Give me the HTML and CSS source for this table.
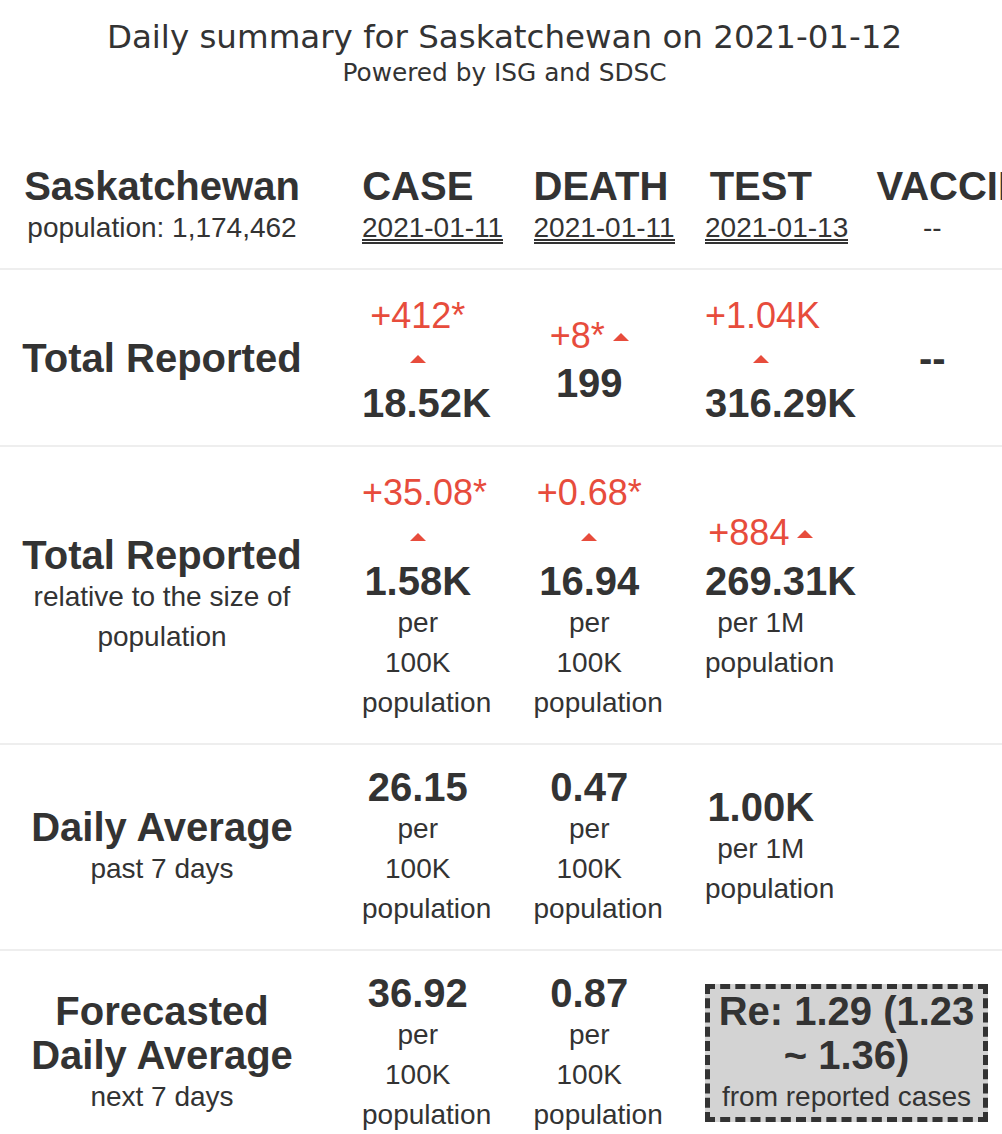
FILE: index.html
```html
<!DOCTYPE html>
<html lang="en">
<head>
<meta charset="utf-8">
<title>Daily summary for Saskatchewan</title>
<link rel="stylesheet" href="styles.css">
</head>
<body>
<header class="summary-head">
  <h1 class="summary-title">Daily summary for Saskatchewan on 2021-01-12</h1>
  <p class="summary-credit">Powered by ISG and SDSC</p>
</header>
<table class="stats">
  <thead>
    <tr>
      <th class="row-label"><div class="big">Saskatchewan</div><div class="note">population: 1,174,462</div></th>
      <th class="metric"><div class="big">CASE</div><div class="note"><span class="date">2021-01-11</span></div></th>
      <th class="metric"><div class="big">DEATH</div><div class="note"><span class="date">2021-01-11</span></div></th>
      <th class="metric"><div class="big">TEST</div><div class="note"><span class="date">2021-01-13</span></div></th>
      <th class="metric"><div class="big">VACCINE</div><div class="note">--</div></th>
    </tr>
  </thead>
  <tbody>
    <tr>
      <th class="row-label"><div class="big">Total Reported</div></th>
      <td><div class="delta"><span class="delta-num">+412*</span> <span class="caret"></span></div><div class="big">18.52K</div></td>
      <td><div class="delta"><span class="delta-num">+8*</span> <span class="caret"></span></div><div class="big">199</div></td>
      <td><div class="delta"><span class="delta-num">+1.04K</span> <span class="caret"></span></div><div class="big">316.29K</div></td>
      <td><div class="big">--</div></td>
    </tr>
    <tr>
      <th class="row-label"><div class="big">Total Reported</div><div class="note">relative to the size of population</div></th>
      <td><div class="delta"><span class="delta-num">+35.08*</span> <span class="caret"></span></div><div class="big">1.58K</div><div class="note">per 100K population</div></td>
      <td><div class="delta"><span class="delta-num">+0.68*</span> <span class="caret"></span></div><div class="big">16.94</div><div class="note">per 100K population</div></td>
      <td><div class="delta"><span class="delta-num">+884</span> <span class="caret"></span></div><div class="big">269.31K</div><div class="note">per 1M population</div></td>
      <td></td>
    </tr>
    <tr>
      <th class="row-label"><div class="big">Daily Average</div><div class="note">past 7 days</div></th>
      <td><div class="big">26.15</div><div class="note">per 100K population</div></td>
      <td><div class="big">0.47</div><div class="note">per 100K population</div></td>
      <td><div class="big">1.00K</div><div class="note">per 1M population</div></td>
      <td></td>
    </tr>
    <tr>
      <th class="row-label"><div class="big">Forecasted Daily Average</div><div class="note">next 7 days</div></th>
      <td><div class="big">36.92</div><div class="note">per 100K population</div></td>
      <td><div class="big">0.87</div><div class="note">per 100K population</div></td>
      <td colspan="2"><div class="re-box"><div class="big">Re: 1.29 (1.23 ~ 1.36)</div><div class="note">from reported cases</div></div></td>
    </tr>
  </tbody>
</table>
</body>
</html>
```

FILE: styles.css
```css
* { box-sizing: border-box; }
html, body { margin: 0; padding: 0; overflow: hidden; }
body {
  background: #fff;
  color: #333;
  font-family: "Liberation Sans", Arial, Helvetica, sans-serif;
  font-size: 28px;
  line-height: 40px;
}
.summary-head {
  padding-top: 19px;
  padding-left: 7px;
  text-align: center;
  font-family: "DejaVu Sans", Verdana, sans-serif;
  color: #333;
}
.summary-title { margin: 0; font-size: 32.5px; font-weight: normal; line-height: 37px; }
.summary-credit { margin: 0; padding-top: 3px; font-size: 24.8px; line-height: 28px; }

.stats {
  margin-top: 57px;
  width: 1018px;
  table-layout: fixed;
  border-collapse: collapse;
}
.stats th, .stats td {
  width: 171.5px;
  padding: 20px 30px;
  text-align: center;
  vertical-align: middle;
  font-weight: normal;
}
.stats .row-label { width: 332px; padding-left: 22px; }
.stats tbody tr { border-top: 2px solid #eee; }

.big { font-size: 40px; font-weight: bold; line-height: 44px; }
.delta { color: #e74c3c; }
.delta-num { font-size: 36px; line-height: 1.42857; }
.caret {
  display: inline-block;
  width: 0;
  height: 0;
  margin-bottom: 7px;
  vertical-align: baseline;
  border-left: 8px solid transparent;
  border-right: 8px solid transparent;
  border-bottom: 8px solid currentColor;
}
.date {
  display: inline-block;
  white-space: nowrap;
  line-height: 23px;
  border-bottom: 5px double #333;
}
.re-box {
  border: 5px dashed #333;
  background: #d3d3d3;
}
```
